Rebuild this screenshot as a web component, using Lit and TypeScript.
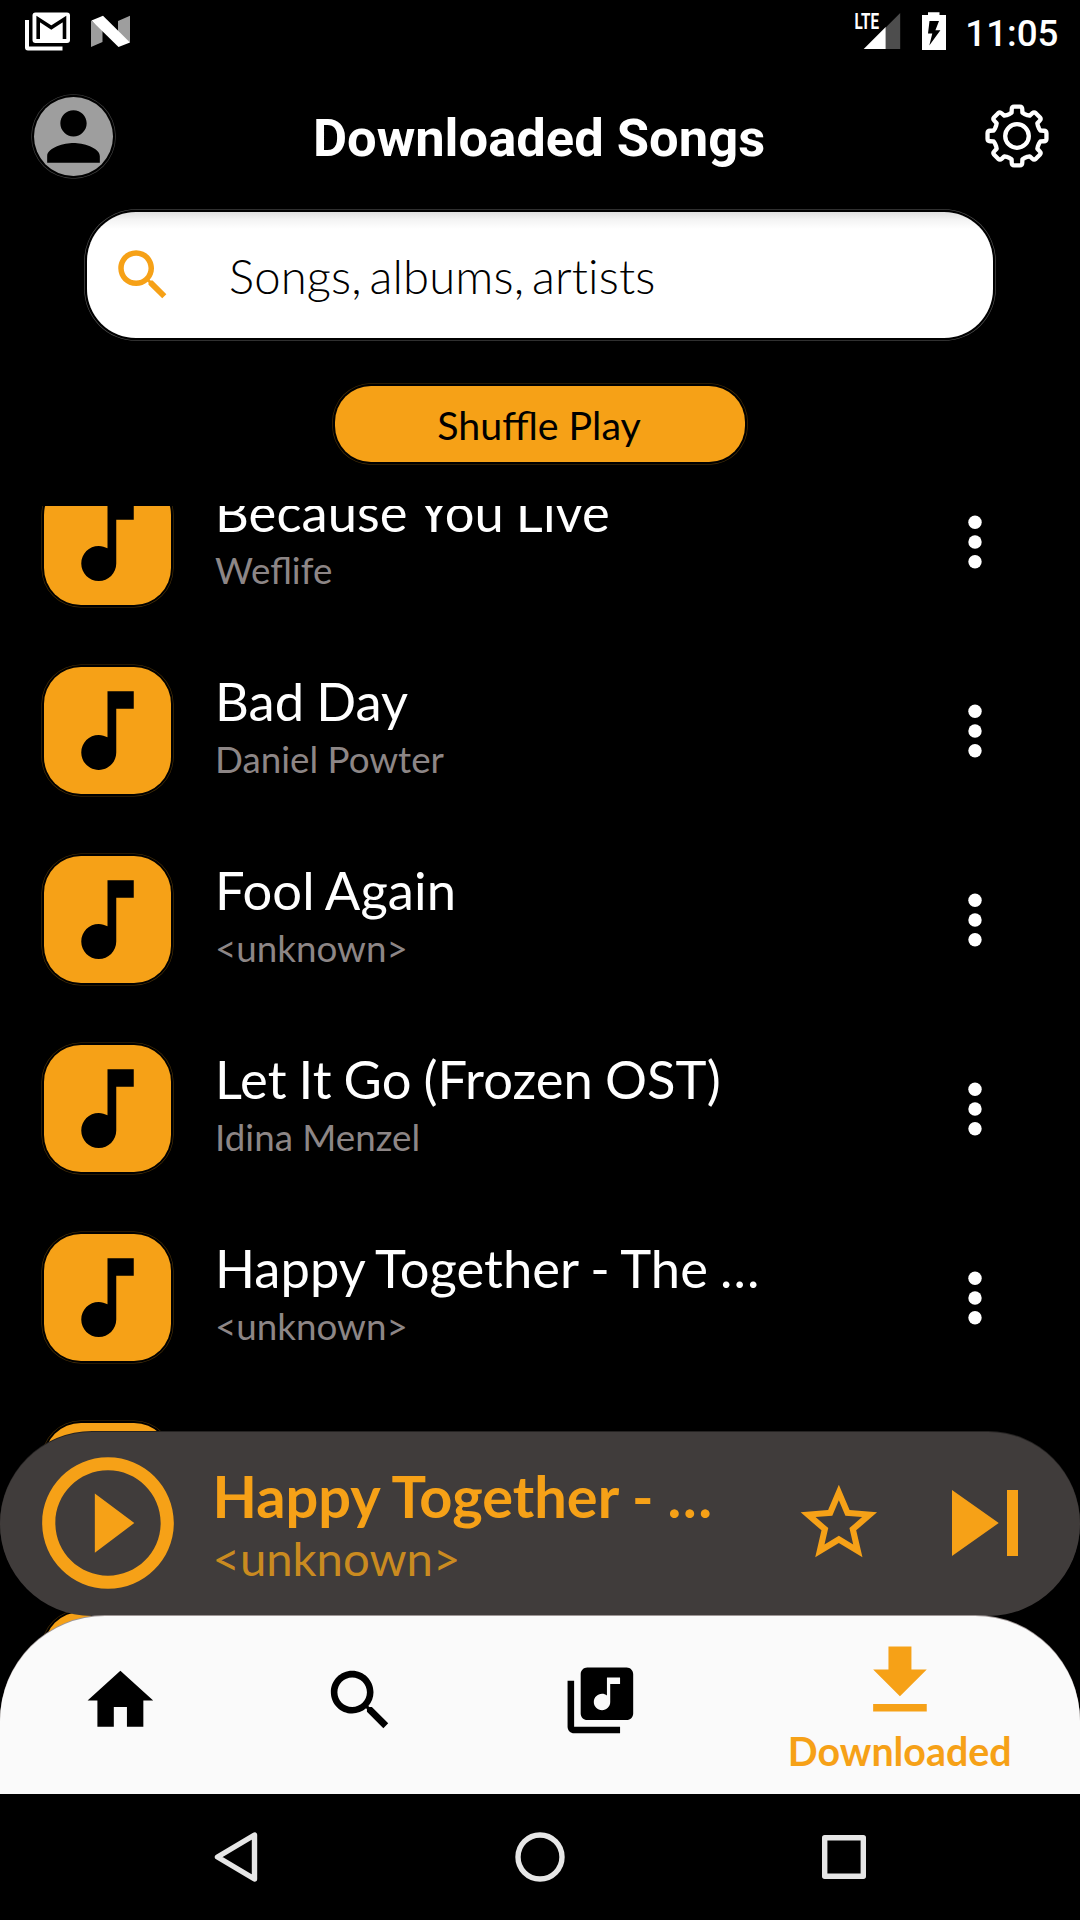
import { LitElement, html, css, svg } from "lit";
import { customElement, property } from "lit/decorators.js";

const MUSIC_NOTE =
  "M12 3v10.55c-.59-.34-1.27-.55-2-.55-2.21 0-4 1.79-4 4s1.79 4 4 4 4-1.79 4-4V7h4V3h-6z";
const SEARCH =
  "M15.5 14h-.79l-.28-.27C15.41 12.59 16 11.11 16 9.5 16 5.91 13.09 3 9.5 3S3 5.91 3 9.5 5.91 16 9.5 16c1.61 0 3.09-.59 4.23-1.57l.27.28v.79l5 4.99L20.49 19l-4.99-5zm-6 0C7.01 14 5 11.99 5 9.5S7.01 5 9.5 5 14 7.01 14 9.5 11.99 14 9.5 14z";
const PERSON =
  "M12 12c2.21 0 4-1.79 4-4s-1.79-4-4-4-4 1.79-4 4 1.79 4 4 4zm0 2c-2.67 0-8 1.34-8 4v2h16v-2c0-2.66-5.33-4-8-4z";
const PLAY_CIRCLE =
  "M10 16.5l6-4.5-6-4.5v9zM12 2C6.48 2 2 6.48 2 12s4.48 10 10 10 10-4.48 10-10S17.52 2 12 2zm0 18c-4.41 0-8-3.59-8-8s3.59-8 8-8 8 3.59 8 8-3.59 8-8 8z";
const STAR =
  "M12 15.39L8.24 17.66L9.23 13.38L5.91 10.5L10.29 10.13L12 6.09L13.71 10.13L18.09 10.5L14.77 13.38L15.76 17.66M22 9.24L14.81 8.63L12 2L9.19 8.63L2 9.24L7.45 13.97L5.82 21L12 17.27L18.18 21L16.54 13.97L22 9.24Z";
const SKIP_NEXT = "M6 18l8.5-6L6 6v12zM16 6v12h2V6h-2z";
const HOME = "M10 20v-6h4v6h5v-8h3L12 3 2 12h3v8z";
const LIBRARY =
  "M20 2H8c-1.1 0-2 .9-2 2v12c0 1.1.9 2 2 2h12c1.1 0 2-.9 2-2V4c0-1.1-.9-2-2-2zm-2 5h-3v5.5c0 1.38-1.12 2.5-2.5 2.5S10 13.88 10 12.5s1.12-2.5 2.5-2.5c.57 0 1.08.19 1.5.51V5h4v2zM4 6H2v14c0 1.1.9 2 2 2h14v-2H4V6z";
const DOWNLOAD = "M19 9h-4V3H9v6H5l7 7 7-7zM5 18v2h14v-2H5z";

/** Outline of a cog with eight rounded teeth, centred on 0,0. */
function cogOutline(): string {
  const at = (r: number, deg: number) => {
    const a = (deg * Math.PI) / 180;
    return `${(r * Math.cos(a)).toFixed(2)} ${(r * Math.sin(a)).toFixed(2)}`;
  };
  const parts: string[] = [];
  for (let i = 0; i < 8; i++) {
    const c = i * 45 - 90;
    parts.push(
      `${i === 0 ? "M" : "L"}${at(23.3, c - 18.5)}`,
      `L${at(24, c - 13)}`,
      `L${at(27.5, c - 11)}`,
      `Q${at(29.8, c - 10)} ${at(29.6, c - 5.5)}`,
      `L${at(29.6, c + 5.5)}`,
      `Q${at(29.8, c + 10)} ${at(27.5, c + 11)}`,
      `L${at(24, c + 13)}`,
      `L${at(23.3, c + 18.5)}`
    );
  }
  return parts.join("") + "Z";
}

@customElement("md-icon")
class MdIcon extends LitElement {
  @property() path = "";

  static styles = css`
    :host {
      display: block;
      flex: none;
      width: 79px;
      height: 79px;
    }
    .glyph {
      display: block;
      width: 100%;
      height: 100%;
      fill: currentColor;
    }
  `;

  render() {
    return html`<svg class="glyph" viewBox="0 0 24 24"><path d=${this.path} /></svg>`;
  }
}

@customElement("system-status")
class SystemStatus extends LitElement {
  static styles = css`
    :host {
      display: block;
      height: 63px;
    }
    .bar {
      display: flex;
      justify-content: space-between;
      height: 63px;
      padding: 0 21.5px 0 25px;
      box-sizing: border-box;
    }
    .side {
      display: flex;
    }
    .side svg {
      display: block;
      height: 63px;
    }
    .lte {
      font: 700 22.5px Roboto, sans-serif;
      fill: #fff;
    }
    .clock {
      font: 500 36.75px/63px Roboto, sans-serif;
      color: #fff;
      padding-top: 2px;
      margin-left: 18.5px;
    }
  `;

  render() {
    return html`
      <div class="bar">
        <div class="side">
          <svg width="106" viewBox="25 0 106 63">
            <path d="M25 20h4v26.500h33.500v4H28q-3 0-3-3z" fill="#fff" />
            <rect x="32.500" y="12.500" width="37.500" height="30.500" rx="3" fill="#fff" />
            <path d="M38.200 39V19L51.300 27.500 64.500 19V39" fill="none" stroke="#000" stroke-width="3.600" />
            <path d="M91 20.500L102.500 29V42L91 47zM118 21L130 15.700V42.500L118 35z" fill="#9e9e9e" />
            <path d="M91.500 20.500L103 15.700 130 42.500 118.500 47z" fill="#fff" />
          </svg>
        </div>
        <div class="side">
          <svg width="94" viewBox="853 0 94 63">
            <text class="lte" x="854.500" y="29.300" textLength="24.500" lengthAdjust="spacingAndGlyphs">LTE</text>
            <path d="M885.700 27.500L900.200 13V49H885.700z" fill="#4d4d4d" />
            <path d="M863.700 49L885.700 27V49z" fill="#fff" />
            <path d="M922 15h6v-2.700h11.500V15h6.500v35h-24z" fill="#fff" />
            <path d="M929.500 21h9.500l-3.600 9.300h5L929.300 45.500l3-12H928z" fill="#000" />
          </svg>
          <span class="clock">11:05</span>
        </div>
      </div>
    `;
  }
}

@customElement("song-row")
class SongRow extends LitElement {
  @property() name = "";
  @property() artist = "";

  static styles = css`
    :host {
      display: block;
      flex: none;
      height: 189px;
      font-family: Lato, sans-serif;
    }
    .row {
      display: flex;
      align-items: center;
      height: 133px;
      padding: 0 94px 0 41.5px;
    }
    .tile {
      flex: none;
      display: flex;
      align-items: center;
      justify-content: center;
      width: 126.5px;
      height: 127px;
      margin: 2.5px;
      border-radius: 37px;
      background: #f6a117;
      color: #000;
      box-shadow: 0 0 0 2px #000, 0 0 0 2.6px #4a3108;
    }
    .tile md-icon {
      width: 105px;
      height: 105px;
    }
    .texts {
      flex: none;
      width: 560px;
      margin-left: 42px;
      padding-bottom: 12px;
    }
    .name {
      font-size: 52.5px;
      line-height: 63px;
      color: #fff;
      white-space: nowrap;
      word-spacing: -1.5px;
      letter-spacing: 0.07px;
      font-variant-ligatures: common-ligatures;
    }
    .artist {
      font-size: 36.75px;
      line-height: 44px;
      margin-top: 5px;
      color: #8d8686;
    }
    .more {
      margin-left: auto;
      width: 22px;
      height: 56px;
      fill: #fff;
    }
  `;

  render() {
    return html`
      <div class="row">
        <div class="tile"><md-icon .path=${MUSIC_NOTE}></md-icon></div>
        <div class="texts">
          <div class="name">${this.name}</div>
          <div class="artist">${this.artist}</div>
        </div>
        <svg class="more" viewBox="0 0 22 56">
          <circle cx="11" cy="8.200" r="6.700" />
          <circle cx="11" cy="28" r="6.700" />
          <circle cx="11" cy="47.800" r="6.700" />
        </svg>
      </div>
    `;
  }
}

@customElement("app-root")
class AppRoot extends LitElement {
  private songs = [
    { name: "Because You Live", artist: "Weflife" },
    { name: "Bad Day", artist: "Daniel Powter" },
    { name: "Fool Again", artist: "<unknown>" },
    { name: "Let It Go (Frozen OST)", artist: "Idina Menzel" },
    { name: "Happy Together - The …", artist: "<unknown>" },
    { name: "", artist: "" },
    { name: "", artist: "" },
  ];

  static styles = css`
    :host {
      display: block;
      width: 1080px;
      height: 1920px;
      overflow: hidden;
      background: #000;
      font-family: Lato, sans-serif;
    }
    .screen {
      display: flex;
      flex-direction: column;
      height: 1920px;
    }
    .header {
      display: grid;
      grid-template-columns: 1fr auto 1fr;
      align-items: center;
      height: 146px;
    }
    .avatar {
      margin-left: 34px;
      border-radius: 50%;
      background: #9e9e9e;
      color: #000;
      box-shadow: 0 0 0 2.2px #000, 0 0 0 2.8px #444;
    }
    .title {
      font: 700 52.5px/62px Roboto, sans-serif;
      color: #fff;
      margin: 4px 2px 0 0;
    }
    .cog {
      justify-self: end;
      margin-right: 29px;
      width: 68px;
      height: 68px;
      fill: none;
      stroke: #fff;
      stroke-width: 4.3;
      stroke-linejoin: round;
    }
    .search {
      flex: none;
      display: flex;
      align-items: center;
      box-sizing: border-box;
      width: 906px;
      height: 126px;
      margin: 3px 0 0 87px;
      padding-left: 23px;
      border-radius: 49px;
      background: linear-gradient(#dfdfdf, #f4f4f4 8px, #fff 17px);
      box-shadow: 0 0 0 2.2px #000, 0 0 0 2.8px #555;
    }
    .search md-icon {
      width: 66px;
      height: 66px;
      color: #f6a117;
      margin-top: -1px;
    }
    .hint {
      margin: 1px 0 0 53px;
      font-size: 47.25px;
      font-weight: 300;
      line-height: 58px;
      font-variant-ligatures: none;
      word-spacing: -5.2px;
      letter-spacing: 0.13px;
      color: #000;
    }
    .shuffle {
      flex: none;
      width: 410px;
      height: 76px;
      margin: 48px 0 44px 335px;
      border-radius: 36px;
      background: #f6a117;
      box-shadow: 0 0 0 2.2px #000, 0 0 0 2.8px #4a3108;
      font-size: 39.375px;
      line-height: 78px;
      text-align: center;
      text-indent: -2px;
      color: #000;
    }
    .body {
      flex: none;
      display: grid;
      height: 1288px;
      overflow: hidden;
    }
    .list,
    .dock {
      grid-area: 1 / 1;
    }
    .list {
      display: flex;
      flex-direction: column;
      height: 1288px;
      overflow: hidden;
    }
    .list song-row:first-child {
      margin-top: -31px;
    }
    .dock {
      align-self: end;
      z-index: 1;
    }
    .player {
      display: flex;
      align-items: center;
      height: 184px;
      padding: 0 29px;
      box-sizing: border-box;
      border-radius: 92px;
      background: #403c3b;
      box-shadow: 0 -1px 0 #252322;
      color: #f6a117;
    }
    .play {
      width: 158px;
      height: 158px;
      margin-top: -2px;
    }
    .now {
      flex: none;
      width: 520px;
      margin-left: 25.5px;
      padding-bottom: 1px;
    }
    .now-name {
      font-size: 57.75px;
      font-weight: 700;
      line-height: 68px;
      white-space: nowrap;
    }
    .now-artist {
      font-size: 47.25px;
      line-height: 56px;
      color: #ca8b20;
    }
    .star {
      width: 91.7px;
      height: 91.7px;
      margin: -2px 0 0 60px;
    }
    .skip {
      width: 132px;
      height: 132px;
      margin: -2px 0 0 34.8px;
    }
    .tabs {
      display: flex;
      height: 178px;
      border-radius: 105px 105px 0 0;
      background: #fafafa;
      box-shadow: 0 -1px 0 #9e9695;
    }
    .tab {
      width: 240px;
      display: flex;
      flex-direction: column;
      align-items: center;
      color: #000;
    }
    .tab md-icon {
      width: 78.75px;
      height: 78.75px;
      margin-top: 45.2px;
    }
    .tab.active {
      width: 360px;
      color: #f6a117;
    }
    .tab.active md-icon {
      width: 91.9px;
      height: 91.9px;
      margin-top: 19.3px;
    }
    .label {
      font-size: 39.375px;
      font-weight: 700;
      line-height: 47px;
      margin: -0.5px 0.5px 0 0;
    }
    .system {
      flex: none;
      display: flex;
      justify-content: space-around;
      align-items: center;
      height: 126px;
      padding: 0 84px;
    }
    .key {
      width: 60px;
      height: 60px;
      fill: none;
      stroke: #e6e6e6;
      stroke-width: 5.4;
      stroke-linejoin: round;
    }
  `;

  render() {
    const tabs = [HOME, SEARCH, LIBRARY];
    return html`
      <div class="screen">
        <system-status></system-status>
        <div class="header">
          <md-icon class="avatar" .path=${PERSON}></md-icon>
          <div class="title">Downloaded Songs</div>
          <svg class="cog" viewBox="-34 -34 68 68">
            ${svg`<path d=${cogOutline()} /><circle r="11.8" />`}
          </svg>
        </div>
        <div class="search">
          <md-icon .path=${SEARCH}></md-icon>
          <span class="hint">Songs, albums, artists</span>
        </div>
        <div class="shuffle">Shuffle Play</div>
        <div class="body">
          <div class="list">
            ${this.songs.map(
              (s) => html`<song-row .name=${s.name} .artist=${s.artist}></song-row>`
            )}
          </div>
          <div class="dock">
            <div class="player">
              <md-icon class="play" .path=${PLAY_CIRCLE}></md-icon>
              <div class="now">
                <div class="now-name">Happy Together - …</div>
                <div class="now-artist">&lt;unknown&gt;</div>
              </div>
              <md-icon class="star" .path=${STAR}></md-icon>
              <md-icon class="skip" .path=${SKIP_NEXT}></md-icon>
            </div>
            <div class="tabs">
              ${tabs.map((p) => html`<div class="tab"><md-icon .path=${p}></md-icon></div>`)}
              <div class="tab active">
                <md-icon .path=${DOWNLOAD}></md-icon>
                <span class="label">Downloaded</span>
              </div>
            </div>
          </div>
        </div>
        <div class="system">
          <svg class="key" viewBox="-30 -30 60 60"><path d="M18.500 -22V22L-18.500 0z" /></svg>
          <svg class="key" viewBox="-30 -30 60 60"><circle r="22" /></svg>
          <svg class="key" viewBox="-30 -30 60 60"><rect x="-19.300" y="-19.300" width="38.600" height="38.600" /></svg>
        </div>
      </div>
    `;
  }
}
